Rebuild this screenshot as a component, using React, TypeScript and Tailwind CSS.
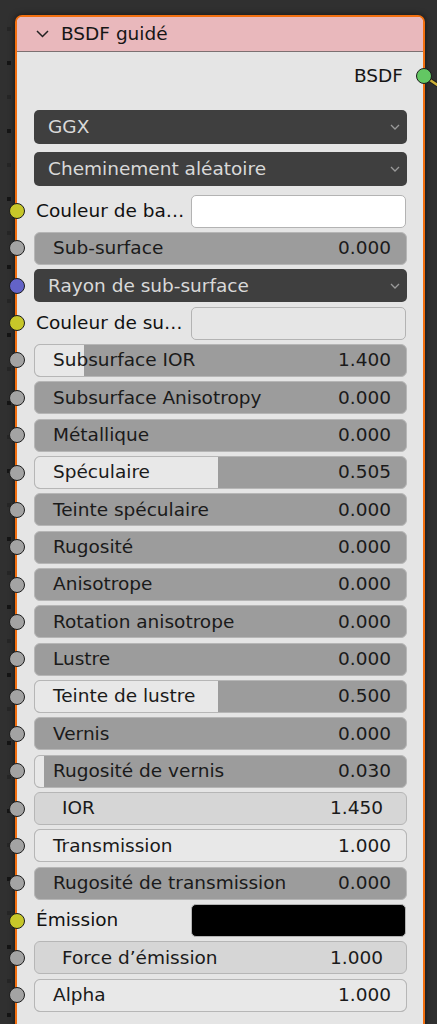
import React from "react";

type Row =
  | { kind: "slider"; label: string; value: string; fill: number; socket?: string }
  | { kind: "number"; label: string; value: string; socket?: string }
  | { kind: "color"; label: string; swatch: string; socket: string }
  | { kind: "menu"; label: string; socket: string };

const GRAY = "#a3a3a3";

const rows: Row[] = [
  { kind: "color", label: "Couleur de ba…", swatch: "bg-white", socket: "#c7c729" },
  { kind: "slider", label: "Sub-surface", value: "0.000", fill: 0 },
  { kind: "menu", label: "Rayon de sub-surface", socket: "#6363c7" },
  { kind: "color", label: "Couleur de su…", swatch: "bg-[#e6e6e6]", socket: "#c7c729" },
  { kind: "slider", label: "Subsurface IOR", value: "1.400", fill: 0.132 },
  { kind: "slider", label: "Subsurface Anisotropy", value: "0.000", fill: 0 },
  { kind: "slider", label: "Métallique", value: "0.000", fill: 0 },
  { kind: "slider", label: "Spéculaire", value: "0.505", fill: 0.494 },
  { kind: "slider", label: "Teinte spéculaire", value: "0.000", fill: 0 },
  { kind: "slider", label: "Rugosité", value: "0.000", fill: 0 },
  { kind: "slider", label: "Anisotrope", value: "0.000", fill: 0 },
  { kind: "slider", label: "Rotation anisotrope", value: "0.000", fill: 0 },
  { kind: "slider", label: "Lustre", value: "0.000", fill: 0 },
  { kind: "slider", label: "Teinte de lustre", value: "0.500", fill: 0.494 },
  { kind: "slider", label: "Vernis", value: "0.000", fill: 0 },
  { kind: "slider", label: "Rugosité de vernis", value: "0.030", fill: 0.025 },
  { kind: "number", label: "IOR", value: "1.450" },
  { kind: "slider", label: "Transmission", value: "1.000", fill: 1 },
  { kind: "slider", label: "Rugosité de transmission", value: "0.000", fill: 0 },
  { kind: "color", label: "Émission", swatch: "bg-black", socket: "#c7c729" },
  { kind: "number", label: "Force d’émission", value: "1.000" },
  { kind: "slider", label: "Alpha", value: "1.000", fill: 1 },
];

function Socket({ color }: { color: string }) {
  return (
    <span
      className="absolute left-[-8px] top-1/2 -translate-y-1/2 w-[16px] h-[16px] rounded-full border-[1.5px] border-[#1c1c1c] z-10"
      style={{ backgroundColor: color }}
    />
  );
}

function MenuChevron() {
  return (
    <svg width="10" height="6" viewBox="0 0 10 6" className="shrink-0">
      <polyline points="1,1 5,5 9,1" fill="none" stroke="#9a9a9a" strokeWidth="1.3" />
    </svg>
  );
}

function Dropdown({ label }: { label: string }) {
  return (
    <div className="flex-1 h-full flex items-center rounded-[5px] bg-[#3f3f3f] pl-[14px] pr-[7px] text-[#d9d9d9]">
      <span className="flex-1">{label}</span>
      <MenuChevron />
    </div>
  );
}

function RowView({ row }: { row: Row }) {
  const socket = row.kind === "color" || row.kind === "menu" ? row.socket : row.socket ?? GRAY;
  return (
    <div className="relative flex h-[33px] pl-[17px] pr-[16px]">
      <Socket color={socket} />
      {row.kind === "menu" && <Dropdown label={row.label} />}
      {row.kind === "color" && (
        <div className="flex-1 flex items-center">
          <span className="flex-1 pl-[2px] text-[#111]">{row.label}</span>
          <span className={`w-[215px] h-[33px] mr-[1px] rounded-[5px] border border-[#b3b3b3] ${row.swatch}`} />
        </div>
      )}
      {row.kind === "slider" && (
        <div className="relative flex-1 flex items-center rounded-[6px] border border-[#b6b6b6] bg-[#9c9c9c] overflow-hidden text-[#1a1a1a]">
          <div
            className="absolute left-0 top-0 bottom-0 bg-[#e8e8e8]"
            style={{ width: `${row.fill * 100}%` }}
          />
          <span className="relative flex-1 pl-[18px]">{row.label}</span>
          <span className="relative pr-[15px]">{row.value}</span>
        </div>
      )}
      {row.kind === "number" && (
        <div className="flex-1 flex items-center rounded-[6px] border border-[#b6b6b6] bg-[#d6d6d6] text-[#1a1a1a]">
          <span className="flex-1 pl-[27px]">{row.label}</span>
          <span className="pr-[23px]">{row.value}</span>
        </div>
      )}
    </div>
  );
}

const dots = Array.from({ length: 31 }, (_, i) => i);

export default function App() {
  return (
    <div className="relative w-[437px] h-[1024px] overflow-hidden bg-[#303030] font-['DejaVu_Sans',sans-serif] text-[18.5px] leading-none">
      {/* canvas grid */}
      <div className="absolute left-[7px] top-[27px] flex flex-col gap-[30px]">
        {dots.map((i) => (
          <span key={i} className={`w-[4px] h-[4px] ${i % 2 ? "bg-[#151515]" : "bg-[#262626]"}`} />
        ))}
      </div>

      {/* link from output */}
      <svg className="absolute left-[420px] top-[70px]" width="20" height="20" viewBox="0 0 20 20">
        <line x1="4" y1="6" x2="22" y2="18" stroke="#1c1c1c" strokeWidth="4.5" />
        <line x1="4" y1="6" x2="22" y2="18" stroke="#cdb13a" strokeWidth="2.5" />
      </svg>

      {/* node */}
      <div className="absolute left-[15px] top-[15px] w-[410px] h-[1100px] rounded-[7px] border-2 border-[#f26f10] bg-[#e5e5e5] shadow-[0_0_6px_rgba(0,0,0,0.6)]">
        <div className="h-[35px] flex items-center gap-[12px] pl-[19px] rounded-t-[5px] bg-[#e9b8bc] border-b border-[#7c7071] text-[#161616]">
          <svg width="13" height="8" viewBox="0 0 13 8">
            <polyline points="1,1 6.5,6.5 12,1" fill="none" stroke="#222" strokeWidth="1.5" />
          </svg>
          <span>BSDF guidé</span>
        </div>

        <div className="pt-[11px]">
          <div className="relative h-[26px] flex items-center justify-end pr-[20px] text-[#161616]">
            <span>BSDF</span>
            <span className="absolute right-[-9px] top-1/2 -translate-y-1/2 w-[16px] h-[16px] rounded-full border-[1.5px] border-[#1c1c1c] bg-[#63c763]" />
          </div>

          <div className="mt-[21px] flex flex-col gap-[8px] pl-[17px] pr-[16px]">
            <div className="h-[34px] flex">
              <Dropdown label="GGX" />
            </div>
            <div className="h-[34px] flex">
              <Dropdown label="Cheminement aléatoire" />
            </div>
          </div>

          <div className="mt-[8.6px] flex flex-col gap-[4.35px]">
            {rows.map((row) => (
              <RowView key={row.label} row={row} />
            ))}
          </div>
        </div>
      </div>
    </div>
  );
}
